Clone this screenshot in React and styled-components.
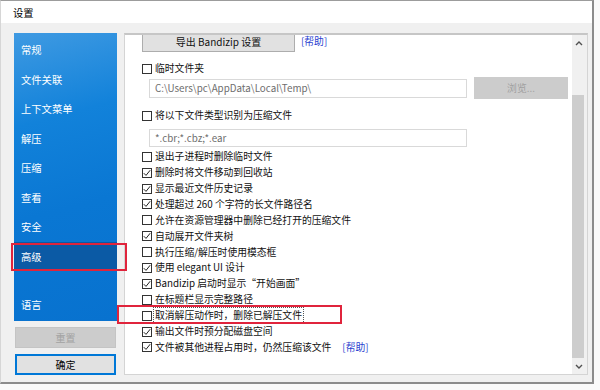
import styled, { createGlobalStyle } from "styled-components";

const GlobalStyle = createGlobalStyle`
  html, body {
    margin: 0;
    padding: 0;
    background: #ffffff;
    overflow: hidden;
  }
  body {
    font-family: "Noto Sans CJK SC", "Noto Sans", sans-serif;
  }
`;

const Stage = styled.div`
  position: relative;
  width: 600px;
  height: 390px;
  background: #fafafa;
`;

const Window = styled.div`
  box-sizing: border-box;
  width: 594px;
  height: 384px;
  border-top: 1px solid #9c9c9c;
  border-left: 1px solid #d6d6d6;
  border-right: 2px solid #8c8c8c;
  border-bottom: 2px solid #8c8c8c;
  background: #f0f0f0;
  display: flex;
  flex-direction: column;
`;

const TitleBar = styled.div`
  height: 22px;
  background: #ffffff;
  display: flex;
  align-items: center;
  padding-left: 12px;
  font-size: 10.3px;
  color: #000;
`;

const Body = styled.div`
  flex: 1;
  display: flex;
  gap: 7px;
  padding: 10px 4px 7px 13px;
  min-height: 0;
`;

const SideColumn = styled.div`
  width: 103px;
  display: flex;
  flex-direction: column;
`;

const Nav = styled.div`
  height: 288px;
  padding-top: 2px;
  box-sizing: border-box;
  background: linear-gradient(165deg, #3f9ae2 0%, #1282da 30%, #0a77d3 60%, #0872cf 100%);
  display: flex;
  flex-direction: column;
`;

const NavItem = styled.div`
  height: 29.5px;
  display: flex;
  align-items: center;
  padding-left: 7px;
  font-size: 10.3px;
  color: #ffffff;
  background: ${(p) => (p.$active ? "#0b5aa5" : "transparent")};
  margin-top: ${(p) => (p.$gap ? "18.5px" : "0")};
`;

const SideButton = styled.div`
  height: 21px;
  margin: 6px 1px 0;
  box-sizing: border-box;
  display: flex;
  align-items: center;
  justify-content: center;
  font-size: 10px;
  color: ${(p) => (p.$disabled ? "#a2a2a2" : "#000")};
  background: ${(p) => (p.$disabled ? "#cccccc" : "#e1e1e1")};
  border: 1px solid ${(p) => (p.$disabled ? "#c4c4c4" : "#0078d7")};
  box-shadow: ${(p) => (p.$disabled ? "none" : "inset 0 0 0 1px #0078d7")};
`;

const Panel = styled.div`
  width: 464px;
  box-sizing: border-box;
  background: #ffffff;
  border: 1px solid #d4d4d4;
  border-top: 2px solid #c6c6c6;
  display: flex;
`;

const Content = styled.div`
  flex: 1;
  padding-left: 17px;
  display: flex;
  flex-direction: column;
  font-size: 9.8px;
  color: #111;
  overflow: hidden;
`;

const ExportRow = styled.div`
  display: flex;
  align-items: flex-start;
  gap: 6px;
`;

const ExportButton = styled.div`
  width: 153px;
  height: 17px;
  box-sizing: border-box;
  background: #e1e1e1;
  border: 1px solid #adadad;
  border-top: none;
  text-align: center;
  line-height: 13px;
  font-size: 10px;
`;

const HelpLink = styled.span`
  color: #2b3fd0;
  line-height: 13px;
  font-size: 9.8px;
`;

const CheckRow = styled.div`
  height: ${(p) => (p.$h ? p.$h : "15.9px")};
  margin-top: ${(p) => p.$mt || "0"};
  display: flex;
  align-items: center;
  gap: 3px;
  white-space: nowrap;
`;

const Box = styled.span`
  width: 10px;
  height: 10px;
  box-sizing: border-box;
  border: 1px solid #333;
  background: #fff;
  display: flex;
  align-items: center;
  justify-content: center;
  flex-shrink: 0;
`;

const Label = styled.span`
  outline: ${(p) => (p.$focus ? "1px dotted #555" : "none")};
  outline-offset: 1px;
  line-height: 13px;
`;

const FieldRow = styled.div`
  display: flex;
  align-items: flex-start;
  gap: 7px;
  margin-top: ${(p) => p.$mt || "0"};
  padding-left: 7px;
`;

const TextField = styled.div`
  width: 318px;
  height: ${(p) => p.$h || "19px"};
  margin-top: ${(p) => p.$mt || "0"};
  box-sizing: border-box;
  border: 1px solid #d9d9d9;
  background: #fff;
  display: flex;
  align-items: center;
  padding-left: 5px;
  color: #6e6e6e;
  font-size: 9.8px;
`;

const BrowseButton = styled.div`
  width: 94px;
  height: 22px;
  background: #cccccc;
  color: #a0a0a0;
  font-size: 9.8px;
  display: flex;
  align-items: center;
  justify-content: center;
`;

const ScrollBar = styled.div`
  width: 15px;
  background: #f0f0f0;
  display: flex;
  flex-direction: column;
`;

const Arrow = styled.div`
  height: ${(p) => p.$h};
  display: flex;
  align-items: center;
  justify-content: center;
  padding-right: 2px;
`;

const Thumb = styled.div`
  width: 12px;
  height: 264px;
  margin-top: 43px;
  background: #cdcdcd;
`;

const Spacer = styled.div`
  flex: 1;
`;

const Marker = styled.div`
  position: absolute;
  box-sizing: border-box;
  border: 2px solid #e0243c;
  left: ${(p) => p.$x}px;
  top: ${(p) => p.$y}px;
  width: ${(p) => p.$w}px;
  height: ${(p) => p.$h}px;
  pointer-events: none;
`;

const Check = ({ on }) => (
  <Box>
    {on && (
      <svg width="8" height="8" viewBox="0 0 8 8">
        <path d="M0.8 4.2 L3 6.4 L7.2 1.2" fill="none" stroke="#222" strokeWidth="1" />
      </svg>
    )}
  </Box>
);

const navItems = ["常规", "文件关联", "上下文菜单", "解压", "压缩", "查看", "安全", "高级"];

const options = [
  ["退出子进程时删除临时文件", false],
  ["删除时将文件移动到回收站", true],
  ["显示最近文件历史记录", true],
  ["处理超过 260 个字符的长文件路径名", true],
  ["允许在资源管理器中删除已经打开的压缩文件", false],
  ["自动展开文件夹树", true],
  ["执行压缩/解压时使用模态框", false],
  ["使用 elegant UI 设计", true],
  ["Bandizip 启动时显示“开始画面”", true],
  ["在标题栏显示完整路径", false],
  ["取消解压动作时，删除已解压文件", false, true],
  ["输出文件时预分配磁盘空间", true],
];

const App = () => {
  return (
    <Stage>
      <GlobalStyle />
      <Window>
        <TitleBar>设置</TitleBar>
        <Body>
          <SideColumn>
            <Nav>
              {navItems.map((n) => (
                <NavItem key={n} $active={n === "高级"}>
                  {n}
                </NavItem>
              ))}
              <NavItem $gap>语言</NavItem>
            </Nav>
            <SideButton $disabled>重置</SideButton>
            <SideButton>确定</SideButton>
          </SideColumn>
          <Panel>
            <Content>
              <ExportRow>
                <ExportButton>导出 Bandizip 设置</ExportButton>
                <HelpLink>[帮助]</HelpLink>
              </ExportRow>
              <CheckRow $mt="9px">
                <Check />
                <Label>临时文件夹</Label>
              </CheckRow>
              <FieldRow>
                <TextField $mt="2px">C:\Users\pc\AppData\Local\Temp\</TextField>
                <BrowseButton>浏览...</BrowseButton>
              </FieldRow>
              <CheckRow $mt="9px">
                <Check />
                <Label>将以下文件类型识别为压缩文件</Label>
              </CheckRow>
              <FieldRow $mt="5px">
                <TextField $h="18px">*.cbr;*.cbz;*.ear</TextField>
              </FieldRow>
              <CheckRow $mt="2px">
                <Check />
                <Label>退出子进程时删除临时文件</Label>
              </CheckRow>
              {options.slice(1).map(([text, on, focus]) => (
                <CheckRow key={text}>
                  <Check on={on} />
                  <Label $focus={focus}>{text}</Label>
                </CheckRow>
              ))}
              <CheckRow>
                <Check on />
                <Label>文件被其他进程占用时，仍然压缩该文件</Label>
                <HelpLink style={{ marginLeft: 8 }}>[帮助]</HelpLink>
              </CheckRow>
            </Content>
            <ScrollBar>
              <Arrow $h="17px">
                <svg width="8" height="5" viewBox="0 0 8 5">
                  <path d="M1 4 L4 1 L7 4" fill="none" stroke="#505050" strokeWidth="1.4" />
                </svg>
              </Arrow>
              <Thumb />
              <Spacer />
              <Arrow $h="16px">
                <svg width="8" height="5" viewBox="0 0 8 5">
                  <path d="M1 1 L4 4 L7 1" fill="none" stroke="#505050" strokeWidth="1.4" />
                </svg>
              </Arrow>
            </ScrollBar>
          </Panel>
        </Body>
      </Window>
      <Marker $x={11} $y={243} $w={116} $h={28} />
      <Marker $x={117} $y={305} $w={225} $h={19} />
    </Stage>
  );
};

export default App;
